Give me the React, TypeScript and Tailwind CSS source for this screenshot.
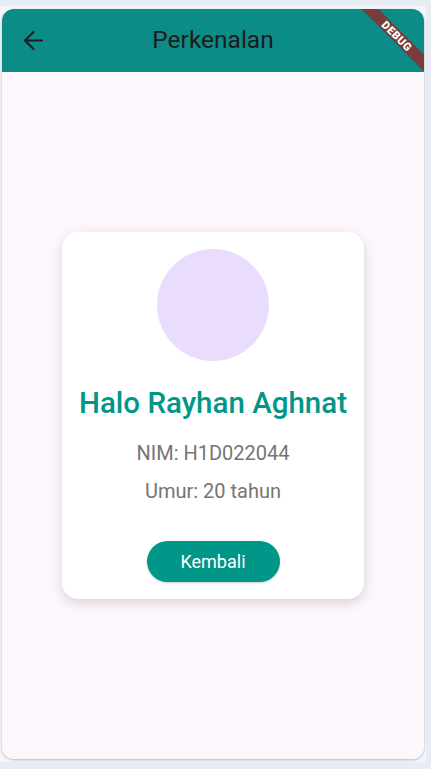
import { ArrowLeft } from "lucide-react";

export default function App() {
  return (
    <div
      className="w-[431px] h-[769px] bg-[#e8edf5] overflow-hidden"
      style={{ fontFamily: "Roboto, 'Noto Sans', sans-serif" }}
    >
      <div className="mt-[6px] w-[426px] h-[756px] bg-[#f4f6fa] pt-[3px] pl-[2px]">
        {/* phone screen */}
        <div className="relative w-[422px] h-[750px] rounded-[12px] overflow-hidden flex flex-col shadow-[0_1px_3px_rgba(0,0,0,0.25)]">
          {/* App bar */}
          <div className="h-[63px] bg-[#0b8c87] flex items-center relative">
            <button className="ml-[17px] w-[29px] h-[29px] flex items-center justify-center text-[#1d1b20]">
              <ArrowLeft size={29} strokeWidth={1.7} />
            </button>
            <h1 className="absolute left-0 right-0 text-center text-[24.5px] text-[#1d1b20] pointer-events-none">
              Perkenalan
            </h1>
          </div>

          {/* Body */}
          <div className="flex-1 bg-[#fdf6fd] flex items-center justify-center">
            <div className="w-[302px] bg-white rounded-[16px] shadow-[0_4px_12px_rgba(0,0,0,0.15)] flex flex-col items-center pt-[17px] pb-[17px]">
              <div className="w-[112px] h-[112px] rounded-full bg-[#eadcfd]" />
              <h2 className="mt-[25px] text-[29.5px] font-medium text-[#009688] leading-[35px]">
                Halo Rayhan Aghnat
              </h2>
              <p className="mt-[19px] text-[20px] text-[#757575] leading-[26px]">
                NIM: H1D022044
              </p>
              <p className="mt-[12px] text-[20px] text-[#757575] leading-[26px]">
                Umur: 20 tahun
              </p>
              <button className="mt-[37px] w-[133px] h-[41px] rounded-full bg-[#009688] text-white text-[18px] shadow-[0_1px_2px_rgba(0,0,0,0.2)]">
                Kembali
              </button>
            </div>
          </div>

          {/* Debug banner */}
          <div className="absolute left-[335px] top-[21px] w-[120px] h-[12px] rotate-45 bg-[#7a3b39] flex items-center justify-center">
            <span className="text-white text-[11px] font-black leading-none tracking-[0.5px]">
              DEBUG
            </span>
          </div>
        </div>
      </div>
    </div>
  );
}
